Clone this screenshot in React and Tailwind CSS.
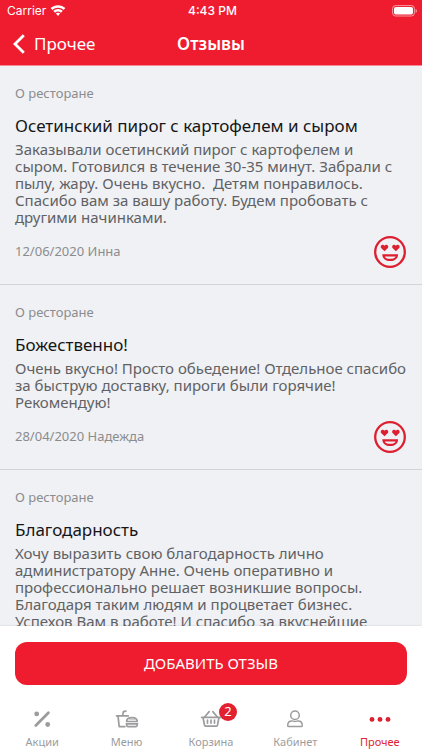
import React, { useState } from "react";

const reviews = [
  {
    id: 1,
    title: "Осетинский пирог с картофелем и сыром",
    text: "Заказывали осетинский пирог с картофелем и\nсыром. Готовился в течение 30-35 минут. Забрали с\nпылу, жару. Очень вкусно.  Детям понравилось.\nСпасибо вам за вашу работу. Будем пробовать с\nдругими начинками.",
    date: "12/06/2020",
    author: "Инна",
  },
  {
    id: 2,
    title: "Божественно!",
    text: "Очень вкусно! Просто обьедение! Отдельное спасибо\nза быструю доставку, пироги были горячие!\nРекомендую!",
    date: "28/04/2020",
    author: "Надежда",
  },
  {
    id: 3,
    title: "Благодарность",
    text: "Хочу выразить свою благодарность лично\nадминистратору Анне. Очень оперативно и\nпрофессионально решает возникшие вопросы.\nБлагодаря таким людям и процветает бизнес.\nУспехов Вам в работе! И спасибо за вкуснейшие",
  },
];

const WifiIcon = () => (
  <svg viewBox="0 0 16 12" className="h-3 w-4" fill="currentColor" aria-hidden="true">
    <path d="M8 2.800c2.100 0 4 .8 5.500 2.200l1.900-1.900C13.400 1.200 10.800.2 8 .2S2.600 1.200.6 3.100L2.500 5C4 3.600 5.900 2.800 8 2.800z" />
    <path d="M8 6.600c1.100 0 2.100.4 2.900 1.100l1.800-1.800C11.400 4.700 9.800 4 8 4s-3.400.7-4.700 1.900l1.800 1.800C5.900 7 6.900 6.600 8 6.600z" />
    <path d="M8 7.800c-.8 0-1.500.3-2.100.8L8 11l2.100-2.400c-.6-.5-1.300-.8-2.100-.8z" />
  </svg>
);

const BatteryIcon = () => (
  <svg viewBox="0 0 26 12" className="h-3 w-[26px]" aria-hidden="true">
    <rect x="0.6" y="0.6" width="21.8" height="10.4" rx="3" fill="none" stroke="#fff" strokeOpacity="0.55" />
    <rect x="2" y="2" width="19" height="7.6" rx="1.8" fill="#fff" />
    <path d="M23.600 4v3.800c.8-.3 1.200-1 1.200-1.900s-.4-1.600-1.200-1.900z" fill="#fff" fillOpacity="0.6" />
  </svg>
);

const LoveIcon = () => (
  <svg viewBox="0 0 32 32" className="size-8 shrink-0 text-[#dd1f30]" fill="currentColor" role="img" aria-label="Отлично">
    <circle cx="16" cy="16" r="14.800" fill="none" stroke="currentColor" strokeWidth="2.300" />
    <path d="M10.500 15.300 7.400 12.300C6.300 11.200 6.600 9.400 7.900 8.900c1-.4 2 0 2.600.8.600-.8 1.600-1.200 2.600-.8 1.300.5 1.600 2.300.5 3.400z" />
    <path d="M21.900 15.300l-3.100-3c-1.100-1.100-.8-2.900.5-3.400 1-.4 2 0 2.600.8.600-.8 1.600-1.200 2.600-.8 1.300.5 1.600 2.300.5 3.400z" />
    <path fillRule="evenodd" d="M8.300 18.200h15.800c0 4.300-3.200 6.900-7.900 6.900s-7.900-2.600-7.900-6.900zM10.800 20.500c.5 1.500 2.300 2.300 5.400 2.300s4.900-.8 5.400-2.300z" />
  </svg>
);

const PercentIcon = () => (
  <svg viewBox="0 0 24 24" className="size-6" fill="currentColor" aria-hidden="true">
    <path d="M5.800 18.400 18.400 5.800" stroke="currentColor" strokeWidth="2.800" strokeLinecap="round" />
    <circle cx="6.700" cy="6.900" r="2.400" />
    <circle cx="17.700" cy="17.500" r="2.400" />
  </svg>
);

const MenuIcon = () => (
  <svg viewBox="0 0 24 24" className="size-6" fill="none" stroke="currentColor" strokeWidth="1.700" strokeLinecap="round" strokeLinejoin="round" aria-hidden="true">
    <path d="M1.500 8.800h11.800M3 8.800l1.200 10.900h5.600M7.600 8.600l.8-3.900 2.500-.6" />
    <path d="M11.600 14.500c0-2.500 2-3.900 5.300-3.900s5.300 1.400 5.300 3.900z" />
    <path d="M11.300 16.800h11.300M11.700 17v1.200c0 .9.700 1.500 1.600 1.500h7.200c.9 0 1.600-.6 1.600-1.500V17" />
    <path d="M15 12.600h.1M17 12.400h.1M19 12.600h.1" strokeWidth="1.100" />
  </svg>
);

const BasketIcon = () => (
  <svg viewBox="0 0 24 24" className="size-6" fill="none" stroke="currentColor" strokeWidth="1.700" strokeLinecap="round" strokeLinejoin="round" aria-hidden="true">
    <path d="M2.600 10.300h18.800M4 10.500l1.500 7.500c.2.800.7 1.200 1.500 1.200h10c.8 0 1.300-.4 1.500-1.200l1.500-7.500" />
    <path d="M5.600 10 10.200 4.600M18.400 10l-4.600-5.400" />
    <path d="M8.500 13.200v2.900M12 13.200v2.900M15.500 13.200v2.900" />
  </svg>
);

const UserIcon = () => (
  <svg viewBox="0 0 24 24" className="size-6" fill="none" stroke="currentColor" strokeWidth="1.500" strokeLinejoin="round" aria-hidden="true">
    <circle cx="12" cy="8.200" r="4.300" />
    <path d="M4.700 18.400c0-2.900 1.700-4.500 4.200-4.500 1 0 1.700.5 3.100.5s2.100-.5 3.100-.5c2.500 0 4.200 1.600 4.200 4.500 0 .8-.4 1.200-1.200 1.200H5.900c-.8 0-1.200-.4-1.200-1.200z" />
  </svg>
);

const DotsIcon = () => (
  <svg viewBox="0 0 24 24" className="size-6" fill="currentColor" aria-hidden="true">
    <circle cx="4" cy="12.400" r="2.400" />
    <circle cx="12" cy="12.400" r="2.400" />
    <circle cx="20" cy="12.400" r="2.400" />
  </svg>
);

const tabs = [
  { id: "promo", label: "Акции", Icon: PercentIcon },
  { id: "menu", label: "Меню", Icon: MenuIcon },
  { id: "cart", label: "Корзина", Icon: BasketIcon, badge: 2 },
  { id: "account", label: "Кабинет", Icon: UserIcon },
  { id: "more", label: "Прочее", Icon: DotsIcon },
];

const ReviewCard = ({ review }) => (
  <article className="border-b border-[#d3d4d6] py-4 pr-4 pl-[15px]">
    <p className="text-[13px] leading-[22px] text-[#8b8c8f]">О ресторане</p>
    <h2 className="mt-[11px] text-[17px] leading-[22px] text-[#161617]">{review.title}</h2>
    <p className="-mr-4 mt-1 text-[15px] leading-[17px] whitespace-pre-wrap text-[#606164]">{review.text}</p>
    {review.author && (
      <div className="mt-[10px] flex items-center justify-between">
        <p className="text-[13px] text-[#8b8c8f]">
          {review.date} {review.author}
        </p>
        <LoveIcon />
      </div>
    )}
  </article>
);

const App = () => {
  const [activeTab, setActiveTab] = useState("more");

  return (
    <div className="flex h-screen flex-col bg-[#f0f1f4] font-['Noto_Sans','Open_Sans',sans-serif]">
      {/* Header */}
      <header className="shrink-0 border-b border-[#f58a94] bg-[#ee1c2e] text-white">
        <div className="grid h-[22px] grid-cols-3 items-center pr-1 pl-[7px] font-['Inter',sans-serif] text-xs">
          <div className="flex items-center gap-1">
            <span>Carrier</span>
            <WifiIcon />
          </div>
          <span className="text-center font-medium">4:43 PM</span>
          <div className="flex justify-end">
            <BatteryIcon />
          </div>
        </div>
        <div className="grid h-[43px] grid-cols-3 items-center px-3">
          <button type="button" className="flex items-center gap-2 text-[17px]">
            <svg viewBox="0 0 14 20" className="h-5 w-[14px]" fill="none" stroke="currentColor" strokeWidth="2.800" aria-hidden="true">
              <path d="M11.800 1.200 3 10l8.800 8.800" />
            </svg>
            Прочее
          </button>
          <h1 className="text-center text-[17px] font-semibold">Отзывы</h1>
        </div>
      </header>

      {/* Reviews */}
      <main className="min-h-0 flex-1 overflow-x-hidden overflow-y-auto [scrollbar-width:none]">
        {reviews.map((review) => (
          <ReviewCard key={review.id} review={review} />
        ))}
      </main>

      {/* Bottom panel */}
      <footer className="shrink-0 bg-white pt-4 shadow-[0_0_2px_rgba(0,0,0,0.15)]">
        <div className="px-[15px]">
          <button type="button" className="h-[43px] w-full rounded-xl bg-[#ee1c2e] text-[15px] text-white">
            ДОБАВИТЬ ОТЗЫВ
          </button>
        </div>
        <nav className="grid grid-cols-5 pt-[22px]">
          {tabs.map(({ id, label, Icon, badge }) => (
            <button
              key={id}
              type="button"
              onClick={() => setActiveTab(id)}
              className={`flex flex-col items-center gap-[3px] ${
                activeTab === id ? "text-[#dd1f30]" : "text-[#9c9c9e]"
              }`}
            >
              <span className="relative">
                <Icon />
                {badge && (
                  <span className="absolute -top-1 -right-[14px] flex size-[18px] items-center justify-center rounded-full bg-[#e3202f] text-[13px] text-white">
                    {badge}
                  </span>
                )}
              </span>
              <span className="text-[11px] leading-4">{label}</span>
            </button>
          ))}
        </nav>
      </footer>
    </div>
  );
};

export default App;
